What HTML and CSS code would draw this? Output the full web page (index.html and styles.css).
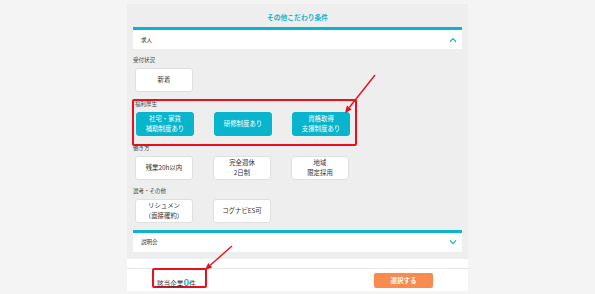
FILE: index.html
```html
<!DOCTYPE html>
<html lang="ja">
<head>
  <meta charset="UTF-8">
  <meta name="viewport" content="width=device-width, initial-scale=1.0">
  <title>その他こだわり条件</title>
  <link rel="stylesheet" href="styles.css">
</head>
<body>
  <div class="page">
    <!-- 条件パネル -->
    <div class="panel">
      <h2 class="panel-title">その他こだわり条件</h2>

      <div class="accordion">
        <span>求人</span>
        <svg class="chevron" width="8" height="6" viewBox="0 0 8 6"><polyline points="1,4.8 4,1.6 7,4.8"/></svg>
      </div>

      <div class="group">
        <p class="group-label">受付状況</p>
        <div class="options">
          <div class="option">新着</div>
        </div>
      </div>

      <div class="group group-marked">
        <p class="group-label">福利厚生</p>
        <div class="options">
          <div class="option option-on">社宅・家賃<br>補助制度あり</div>
          <div class="option option-on">研修制度あり</div>
          <div class="option option-on">資格取得<br>支援制度あり</div>
        </div>
      </div>

      <div class="group group-after-mark">
        <p class="group-label">働き方</p>
        <div class="options">
          <div class="option">残業20h以内</div>
          <div class="option">完全週休<br>2日制</div>
          <div class="option">地域<br>限定採用</div>
        </div>
      </div>

      <div class="group">
        <p class="group-label">選考・その他</p>
        <div class="options">
          <div class="option">リシュメン<br>（面接確約）</div>
          <div class="option">コグナビES可</div>
        </div>
      </div>

      <div class="accordion accordion-closed">
        <span>説明会</span>
        <svg class="chevron" width="8" height="6" viewBox="0 0 8 6"><polyline points="1,1.4 4,4.6 7,1.4"/></svg>
      </div>
    </div>

    <!-- フッター -->
    <div class="page-footer">
      <div class="count">該当企業<span class="count-num">0</span>件</div>
      <div class="select-button">選択する</div>
    </div>
  </div>

  <!-- 注釈の矢印 -->
  <svg class="arrows" width="595" height="294" viewBox="0 0 595 294">
    <line x1="375" y1="75" x2="349.3" y2="107.5"/>
    <polygon points="345,113 351.7,109.4 346.9,105.6"/>
    <line x1="232" y1="246" x2="210.2" y2="265.3"/>
    <polygon points="205,270 212.2,267.6 208.2,263.1"/>
  </svg>
</body>
</html>
```

FILE: styles.css
```css
/* 全体 */
body {
  margin: 0;
  padding: 0;
  font-family: "Noto Sans CJK JP", "Noto Sans", sans-serif;
  background-color: #f4f4f4;
  color: #333;
}

.page {
  width: 341px;
  margin: 4px auto 0;
  background-color: #fff;
}

/* 条件パネル */
.panel {
  background-color: #eeeeee;
  padding: 0 6px 7px;
}

.panel-title {
  margin: 0;
  padding: 8px 0 5px;
  height: 10px;
  line-height: 10px;
  font-size: 6.8px;
  font-weight: bold;
  color: #19b4cc;
  text-align: center;
}

/* アコーディオン */
.accordion {
  display: flex;
  align-items: center;
  justify-content: space-between;
  height: 19px;
  padding: 0 5px 0 8px;
  border-top: 3px solid #0cb3cf;
  background-color: #fff;
  font-size: 5.5px;
  color: #333;
}

.accordion-closed {
  margin-top: 7px;
}

.chevron polyline {
  fill: none;
  stroke: #18b0cc;
  stroke-width: 1.3;
}

/* 条件グループ */
.group {
  margin-top: 7px;
}

.group-label {
  margin: 0 0 4px;
  height: 8px;
  line-height: 8px;
  font-size: 5.5px;
  color: #444;
}

.options {
  display: flex;
  gap: 20px;
  padding-left: 2px;
}

.option {
  box-sizing: border-box;
  width: 58px;
  height: 24px;
  display: flex;
  align-items: center;
  justify-content: center;
  text-align: center;
  background-color: #fff;
  border: 1px solid #e0e0e0;
  border-radius: 3px;
  font-size: 6.4px;
  line-height: 10px;
  color: #333;
}

.option-on {
  background-color: #08b5cd;
  border-color: #08b5cd;
  color: #fff;
}

/* 赤枠 */
.group-marked {
  box-sizing: border-box;
  width: 225px;
  margin-left: -1px;
  padding: 0 0 8px 1px;
  border: 2px solid #e8101a;
  border-radius: 2px;
}

.group-marked .group-label {
  height: 6px;
  line-height: 6px;
  margin-bottom: 4.5px;
}

.group-marked .options {
  padding-left: 1px;
}

.group-after-mark {
  margin-top: -2px;
}

/* フッター */
.page-footer {
  display: flex;
  align-items: flex-start;
  justify-content: space-between;
  height: 22px;
  margin-top: 9px;
  padding: 0 35px 0 25px;
  border-top: 1px solid #e6e6e6;
}

.count {
  box-sizing: border-box;
  width: 55px;
  height: 20px;
  margin-top: -1px;
  padding: 7px 0 0 3px;
  border: 2px solid #e8101a;
  border-radius: 2px;
  font-size: 6.6px;
  line-height: 10px;
  color: #333;
  white-space: nowrap;
}

.count-num {
  font-size: 9.5px;
  font-weight: bold;
  color: #19b4cc;
}

.select-button {
  width: 59px;
  height: 15px;
  margin-top: 4px;
  line-height: 15px;
  text-align: center;
  background-color: #f98b4e;
  border-radius: 2px;
  color: #fff;
  font-size: 6.5px;
  font-weight: bold;
}

/* 矢印 */
.arrows {
  position: absolute;
  top: 0;
  left: 0;
  pointer-events: none;
}

.arrows line {
  stroke: #e8101a;
  stroke-width: 1.4;
}

.arrows polygon {
  fill: #e8101a;
}
```
